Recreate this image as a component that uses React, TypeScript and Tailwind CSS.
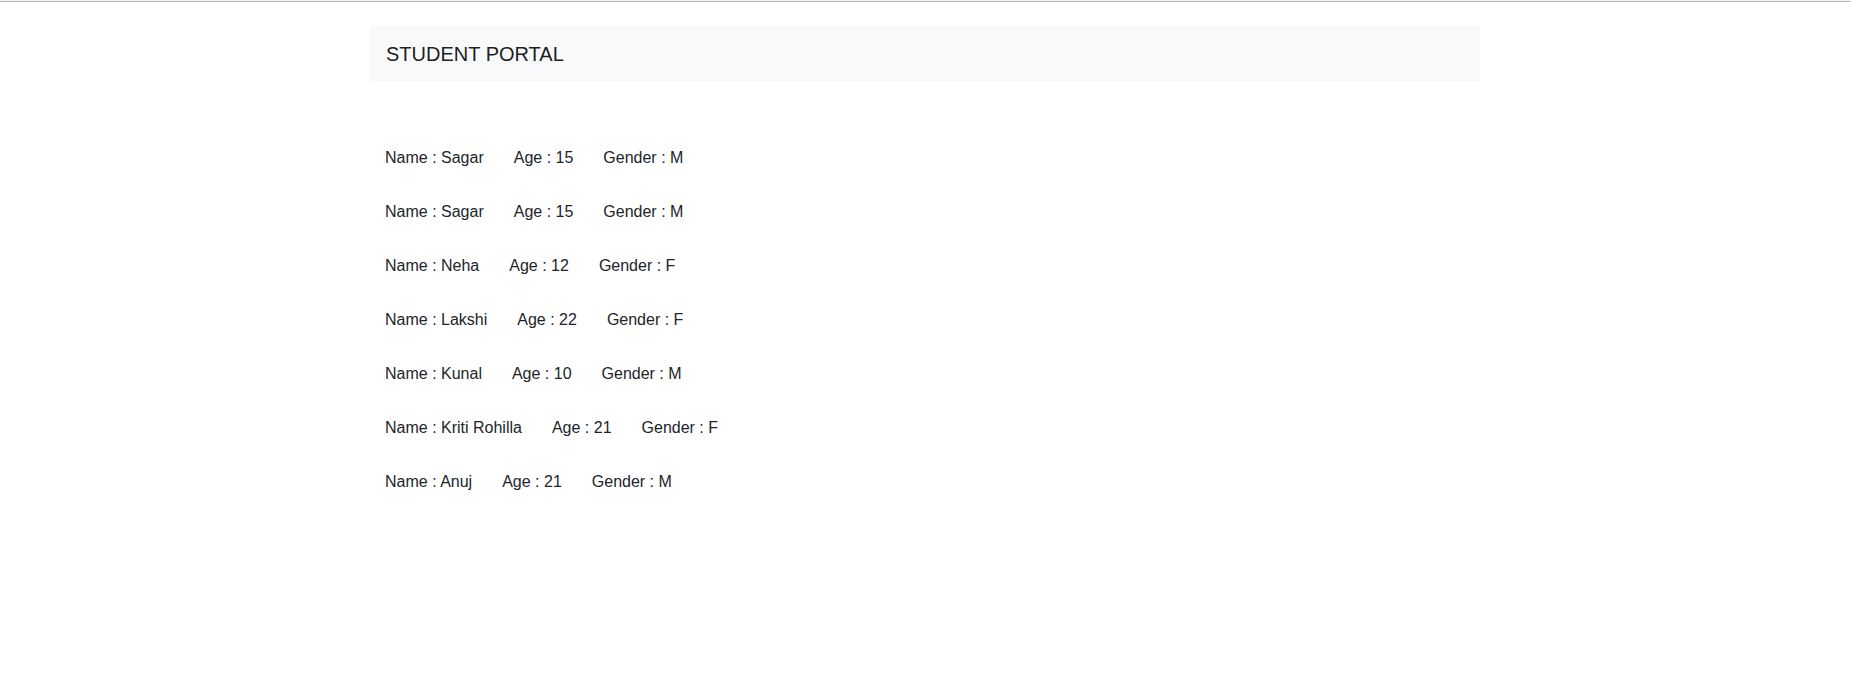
const students = [
  { name: 'Sagar', age: 15, gender: 'M' },
  { name: 'Sagar', age: 15, gender: 'M' },
  { name: 'Neha', age: 12, gender: 'F' },
  { name: 'Lakshi', age: 22, gender: 'F' },
  { name: 'Kunal', age: 10, gender: 'M' },
  { name: 'Kriti Rohilla', age: 21, gender: 'F' },
  { name: 'Anuj', age: 21, gender: 'M' },
];

export default function App() {
  return (
    <div className="border-t border-[#f2f2f2] bg-white font-['Liberation_Sans',Arial,sans-serif] text-base text-[#212529]">
      <div className="border-t border-[#bbbbbb] pr-px">
        <div className="mx-auto max-w-[1110px] pt-6">
          <nav className="flex items-center bg-[#f8f9fb] px-4 py-2">
            <a href="#" className="py-[5px] text-xl leading-[30px] text-black/90">
              STUDENT PORTAL
            </a>
          </nav>
          <ul className="mt-[49px] px-[15px]">
            {students.map((student, index) => (
              <li key={index} className="flex gap-[30px] py-[15px] leading-6">
                <span>Name : {student.name}</span>
                <span>Age : {student.age}</span>
                <span>Gender : {student.gender}</span>
              </li>
            ))}
          </ul>
        </div>
      </div>
    </div>
  );
}
